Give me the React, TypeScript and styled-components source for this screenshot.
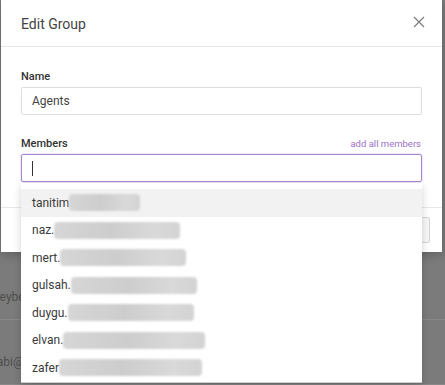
import React from "react";
import styled, { createGlobalStyle } from "styled-components";

const Global = createGlobalStyle`
  html, body { margin: 0; padding: 0; }
  body {
    background: #7b7b7b;
    font-family: Roboto, "Liberation Sans", Arial, sans-serif;
    overflow: hidden;
  }
`;

const Page = styled.div`
  position: relative;
  width: 445px;
  height: 385px;
  overflow: hidden;
`;

const Backdrop = styled.div`
  display: flex;
  flex-direction: column;
  padding-top: 255px;
`;

const BgRow = styled.div`
  padding: 32px 0 12px;
  border-bottom: 1px solid #888;
  font-size: 12px;
  line-height: 20px;
  color: #4e4e4e;
`;

const BgCell = styled.span`
  display: block;
  margin-left: -7px;
`;

const Modal = styled.div`
  position: absolute;
  top: 0;
  left: 1px;
  width: 441px;
  background: #fff;
  box-shadow: 0 2px 10px rgba(0, 0, 0, 0.25);
  display: flex;
  flex-direction: column;
`;

const Header = styled.div`
  height: 46px;
  display: flex;
  align-items: center;
  justify-content: space-between;
  padding: 0 17px 0 20px;
  border-bottom: 1px solid #e8e8e8;
`;

const Title = styled.div`
  font-size: 14px;
  color: #444;
  margin-top: 1px;
`;

const Close = styled.button`
  border: 0;
  background: none;
  padding: 0;
  width: 12px;
  height: 12px;
  display: flex;
  margin-top: -2px;
`;

const Body = styled.div`
  padding: 22px 20px 25px;
  display: flex;
  flex-direction: column;
  gap: 21px;
`;

const Field = styled.div`
  display: flex;
  flex-direction: column;
  gap: 2px;
  position: relative;
`;

const LabelRow = styled.div`
  display: flex;
  justify-content: space-between;
  align-items: baseline;
`;

const Label = styled.label`
  font-size: 11px;
  line-height: 16px;
  font-weight: 500;
  color: #333;
`;

const AddAll = styled.a`
  font-size: 9.5px;
  color: #9a72c6;
  margin-right: 1px;
`;

const Input = styled.div<{ $focused?: boolean }>`
  height: 28px;
  box-sizing: border-box;
  border: 1px solid ${(p) => (p.$focused ? "#a987d1" : "#dedede")};
  box-shadow: ${(p) => (p.$focused ? "0 0 2px rgba(150,110,200,0.55)" : "none")};
  border-radius: 2px;
  padding: 0 10px;
  display: flex;
  align-items: center;
  font-size: 12px;
  color: #444;
`;

const Caret = styled.span`
  width: 1px;
  height: 15px;
  background: #333;
`;

const Dropdown = styled.div`
  position: absolute;
  top: 100%;
  left: 0;
  right: 0;
  margin-top: 1px;
  padding-top: 6px;
  background: #fff;
  border-bottom: 1px solid #cfcfcf;
  box-shadow: 0 3px 8px rgba(0, 0, 0, 0.18);
  z-index: 2;
  display: flex;
  flex-direction: column;
`;

const Item = styled.div<{ $active?: boolean }>`
  height: 27.5px;
  display: flex;
  align-items: center;
  padding: 0 11px;
  font-size: 12px;
  color: #3a3a3a;
  background: ${(p) => (p.$active ? "#f2f2f2" : "#fff")};
`;

const Blur = styled.span`
  display: inline-block;
  height: 17px;
  border-radius: 4px;
  background: linear-gradient(90deg, #d6d6d6, #cdcdcd 45%, #d9d9d9 80%, #d3d3d3);
  filter: blur(1px);
`;

const Footer = styled.div`
  height: 44px;
  border-top: 1px solid #e8e8e8;
  display: flex;
  justify-content: flex-end;
  align-items: center;
  gap: 8px;
  padding-right: 12px;
`;

const Button = styled.button`
  height: 26px;
  padding: 0 14px;
  border: 1px solid #d6d6d6;
  background: #f7f7f7;
  border-radius: 2px;
  font-size: 12px;
  color: #555;
  font-family: inherit;
`;

const members: [string, number][] = [
  ["tanitim", 71],
  ["naz.", 126],
  ["mert.", 126],
  ["gulsah.", 126],
  ["duygu.", 126],
  ["elvan.", 142],
  ["zafer", 143],
];

export default function App() {
  return (
    <Page>
      <Global />
      <Backdrop>
        <BgRow>
          <BgCell>heybek@</BgCell>
        </BgRow>
        <BgRow>
          <BgCell>rabi@</BgCell>
        </BgRow>
      </Backdrop>
      <Modal>
        <Header>
          <Title>Edit Group</Title>
          <Close aria-label="Close">
            <svg width="12" height="12" viewBox="0 0 12 12">
              <path d="M1 1 L11 11 M11 1 L1 11" stroke="#7c7c7c" strokeWidth="1.2" fill="none" />
            </svg>
          </Close>
        </Header>
        <Body>
          <Field>
            <Label>Name</Label>
            <Input>Agents</Input>
          </Field>
          <Field>
            <LabelRow>
              <Label>Members</Label>
              <AddAll>add all members</AddAll>
            </LabelRow>
            <Input $focused>
              <Caret />
            </Input>
            <Dropdown>
              {members.map(([name, w], i) => (
                <Item key={name} $active={i === 0}>
                  {name}
                  <Blur style={{ width: w }} />
                </Item>
              ))}
            </Dropdown>
          </Field>
        </Body>
        <Footer>
          <Button>Cancel</Button>
          <Button>Save</Button>
        </Footer>
      </Modal>
    </Page>
  );
}
